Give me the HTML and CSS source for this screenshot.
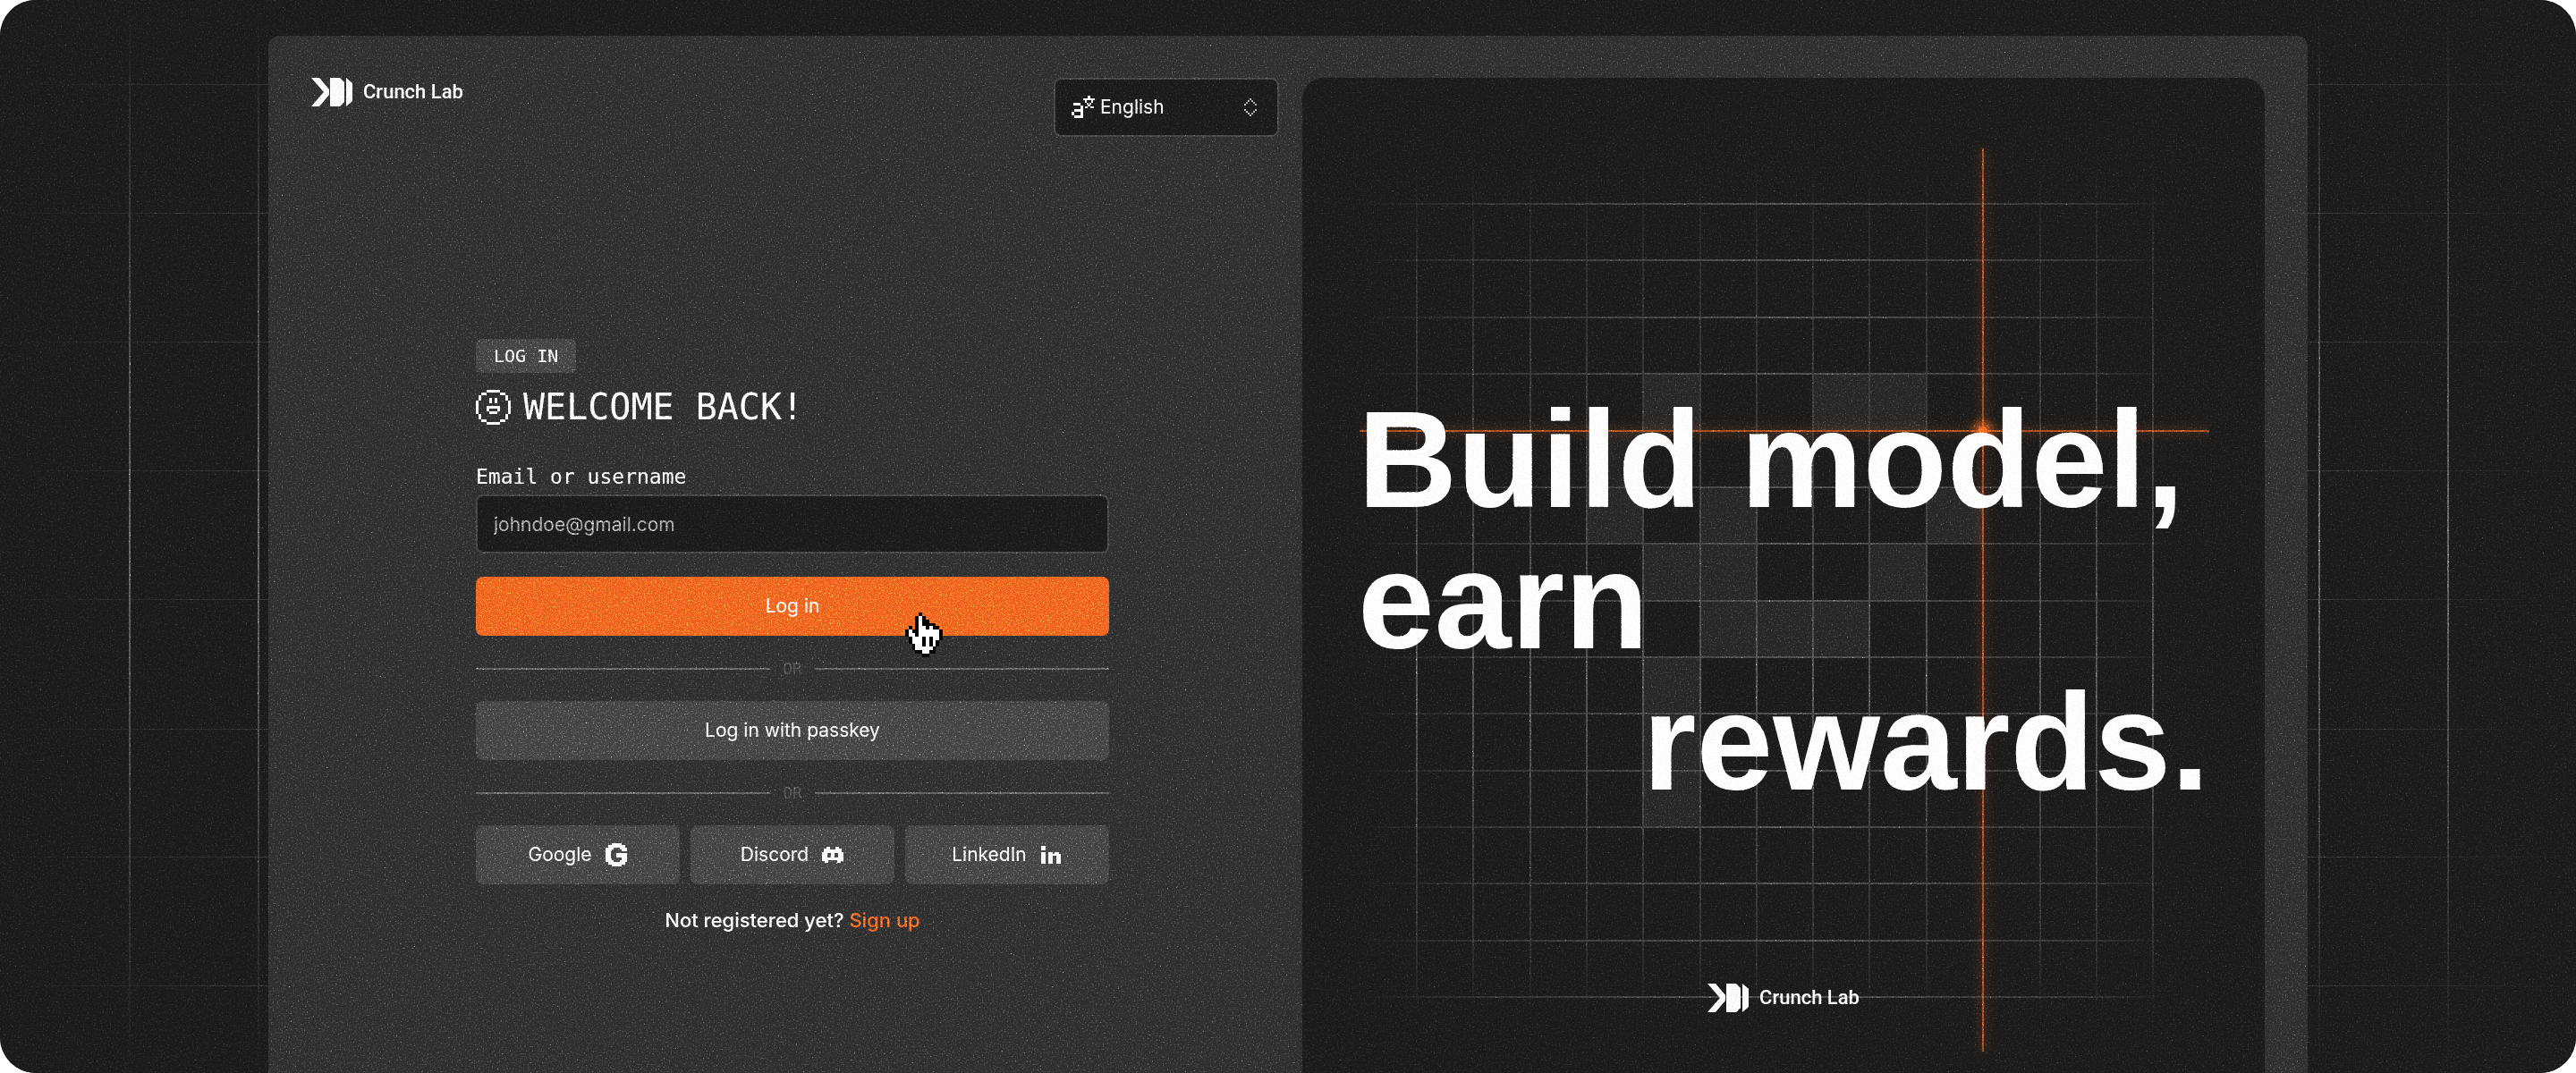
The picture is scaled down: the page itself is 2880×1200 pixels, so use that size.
FILE: index.html
```html
<!DOCTYPE html>
<html lang="en">
<head>
<meta charset="utf-8">
<meta name="viewport" content="width=device-width, initial-scale=1">
<title>Crunch Lab – Log in</title>
<link rel="stylesheet" href="styles.css">
</head>
<body>
<svg class="defs" aria-hidden="true">
  <symbol id="mark" viewBox="0 0 46 32">
    <path fill="currentColor" d="M0 0H9L20 13V19L9 32H0L14 16ZM21 0H32L37 5V27L32 32H21ZM39 0L46 6V26L39 32Z"/>
  </symbol>
</svg>

<div class="stage">
  <svg class="backdrop" aria-hidden="true">
    <defs>
      <linearGradient id="fadeV" x1="0" y1="0" x2="0" y2="1">
        <stop offset="0" stop-color="#606060" stop-opacity="0"/>
        <stop offset=".5" stop-color="#606060"/>
        <stop offset="1" stop-color="#606060" stop-opacity="0"/>
      </linearGradient>
      <linearGradient id="fadeH" x1="0" y1="0" x2="1" y2="0">
        <stop offset="0" stop-color="#303030" stop-opacity="0"/>
        <stop offset=".1" stop-color="#303030"/>
        <stop offset=".9" stop-color="#303030"/>
        <stop offset="1" stop-color="#303030" stop-opacity="0"/>
      </linearGradient>
    </defs>
    <g fill="url(#fadeH)">
      <rect y="94" width="100%" height="1"/><rect y="238" width="100%" height="1"/>
      <rect y="382" width="100%" height="1"/><rect y="526" width="100%" height="1"/>
      <rect y="670" width="100%" height="1"/><rect y="815" width="100%" height="1"/>
      <rect y="958" width="100%" height="1"/><rect y="1102" width="100%" height="1"/>
    </g>
    <g fill="url(#fadeV)">
      <rect x="5%" width="2" height="100%"/><rect x="10%" width="2" height="100%"/>
      <rect x="90%" width="2" height="100%"/><rect x="95%" width="2" height="100%"/>
    </g>
  </svg>

  <main class="window">
    <section class="auth">
      <header class="topbar">
        <div class="brand"><svg class="mark" aria-hidden="true"><use href="#mark"/></svg><span>Crunch Lab</span></div>
        <div class="language">
          <svg class="translate" viewBox="0 0 26 26" aria-hidden="true" fill="currentColor">
            <path d="M2 8H10V11H2ZM10 11H13V25H10ZM3 15H10V18H3ZM0 18H3V22H0ZM3 22H10V25H3ZM18 0H21V3H18ZM13 3H26V5H13ZM15 5H17V8H15ZM22 5H24V8H22ZM17 8H19V10H17ZM20 8H22V10H20ZM18 10H21V12H18ZM15 12H18V14H15ZM21 12H25V14H21Z"/>
          </svg>
          <select aria-label="Language"><option>English</option></select>
          <svg class="updown" viewBox="0 0 14 20" aria-hidden="true" fill="currentColor">
            <path d="M6 0H8V2H6ZM4 2H6V4H4ZM8 2H10V4H8ZM2 4H4V6H2ZM10 4H12V6H10ZM0 6H2V8H0ZM12 6H14V8H12ZM0 12H2V14H0ZM12 12H14V14H12ZM2 14H4V16H2ZM10 14H12V16H10ZM4 16H6V18H4ZM8 16H10V18H8ZM6 18H8V20H6Z"/>
          </svg>
        </div>
      </header>

      <form class="login">
        <span class="badge">LOG IN</span>
        <h1 class="title">
          <svg class="face" viewBox="0 0 13 13" aria-hidden="true" fill="currentColor" shape-rendering="crispEdges">
            <path d="M4 0H9V1H4ZM2 1H4V2H2ZM9 1H11V2H9ZM1 2H2V4H1ZM11 2H12V4H11ZM0 4H1V9H0ZM12 4H13V9H12ZM1 9H2V11H1ZM11 9H12V11H11ZM2 11H4V12H2ZM9 11H11V12H9ZM4 12H9V13H4ZM5 3H6V5H5ZM7 3H8V5H7ZM4 6H9V8H8V7H5V8H4ZM5 8H8V9H5Z"/>
          </svg>
          <span>WELCOME BACK!</span>
        </h1>
        <label class="label" for="user">Email or username</label>
        <input class="field" id="user" type="text" placeholder="johndoe@gmail.com">
        <div class="submit">
          <button class="btn primary" type="submit">Log in</button>
          <svg class="cursor" viewBox="0 0 11 13" aria-hidden="true" shape-rendering="crispEdges">
            <path fill="#000" d="M4 0H5V1H6V2H7V3H9V4H10V5H11V8H10V10H9V12H7V13H5V12H3V11H2V9H1V7H0V5H1V4H2V5H3V1H4Z"/>
            <path fill="#fafafa" d="M4 1H5V4H6V3H6V5H7V4H8V5H9V5H10V8H9V10H8V11H7V12H5V11H3V9H2V7H1V5H2V6H3V7H4Z"/>
            <path fill="#000" d="M5 7H6V10H5ZM7 7H8V10H7Z"/>
          </svg>
        </div>
        <div class="divider"><span>OR</span></div>
        <button class="btn" type="button">Log in with passkey</button>
        <div class="divider"><span>OR</span></div>
        <div class="providers">
          <button class="btn" type="button">Google
            <svg viewBox="0 0 26 26" aria-hidden="true" fill="currentColor"><path d="M8 0H19V2H23V5H25V9H19V7H17V5H10V7H8V9H7V17H8V19H10V21H17V19H19V16H13V11H25V21H23V24H19V26H8V24H4V21H1V5H4V2H8Z"/></svg>
          </button>
          <button class="btn" type="button">Discord
            <svg viewBox="0 0 26 26" aria-hidden="true" fill="currentColor"><path fill-rule="evenodd" d="M6 4H10V7H16V4H20V6H23V10H25V20H22V22H18V19H8V22H4V20H1V10H3V6H6ZM7 11V16H11V11ZM15 11V16H19V11Z"/></svg>
          </button>
          <button class="btn" type="button">LinkedIn
            <svg viewBox="0 0 26 26" aria-hidden="true" fill="currentColor"><path d="M2 3H7V8H2ZM2 10H7V23H2ZM10 10H15V12H17V10H22V12H24V23H19V14H15V23H10Z"/></svg>
          </button>
        </div>
        <p class="signup">Not registered yet? <a href="#">Sign up</a></p>
      </form>
    </section>

    <aside class="hero">
      <svg class="grid" viewBox="0 0 950 1020" aria-hidden="true">
        <defs>
          <linearGradient id="lineH" gradientUnits="userSpaceOnUse" x1="0" y1="0" x2="950" y2="0">
            <stop offset="0" stop-color="#4c4c4c" stop-opacity="0"/><stop offset=".3" stop-color="#3c3c3c"/><stop offset=".5" stop-color="#4c4c4c"/><stop offset=".8" stop-color="#343434"/><stop offset=".95" stop-color="#4c4c4c" stop-opacity="0"/>
          </linearGradient>
          <linearGradient id="lineV" gradientUnits="userSpaceOnUse" x1="0" y1="0" x2="0" y2="1020">
            <stop offset=".02" stop-color="#4c4c4c" stop-opacity="0"/><stop offset=".3" stop-color="#363636"/><stop offset=".6" stop-color="#505050"/><stop offset=".8" stop-color="#343434"/><stop offset=".95" stop-color="#4c4c4c" stop-opacity="0"/>
          </linearGradient>
          <filter id="glow" filterUnits="userSpaceOnUse" x="-30" y="-30" width="1010" height="1080"><feGaussianBlur stdDeviation="6"/></filter>
        </defs>
        <g fill="#262626">
          <path d="M317 257h63v63h-63zM507 257h126v63H507zM253 384h64v63h-64zM380 384h64v63h-64zM633 384h64v63h-64zM317 447h127v64H317zM570 447h63v64h-63zM380 511h190v63H380zM317 574h63v190h-63z"/>
          <path d="M253 320h64v64h-64zM444 320h63v64h-63z" opacity=".7"/>
        </g>
        <path fill="url(#lineH)" d="M0 66h950v2H0zM0 129h950v2H0zM0 193h950v2H0zM0 256h950v2H0zM0 383h950v2H0zM0 446h950v2H0zM0 510h950v2H0zM0 573h950v2H0zM0 636h950v2H0zM0 700h950v2H0zM0 763h950v2H0zM0 826h950v2H0zM0 890h950v2H0zM0 953h950v2H0z"/>
        <path fill="url(#lineV)" d="M63 0h2v1020h-2zM126 0h2v1020h-2zM190 0h2v1020h-2zM253 0h2v1020h-2zM316 0h2v1020h-2zM380 0h2v1020h-2zM443 0h2v1020h-2zM506 0h2v1020h-2zM569 0h2v1020h-2zM633 0h2v1020h-2zM760 0h2v1020h-2zM823 0h2v1020h-2zM886 0h2v1020h-2z"/>
        <g fill="#ed6823">
          <path filter="url(#glow)" opacity=".22" d="M694 5h6v1010h-6zM0 318h950v6H0z"/>
          <path d="M696 5h2v1010h-2zM0 320h950v2H0z" opacity=".6"/>
          <circle cx="697" cy="321" r="5"/><circle cx="697" cy="321" r="9" filter="url(#glow)"/>
        </g>
      </svg>
      <p class="slogan">Build model, earn <span>rewards.</span></p>
      <div class="brand"><svg class="mark" aria-hidden="true"><use href="#mark"/></svg><span>Crunch Lab</span></div>
    </aside>
  </main>

  <svg class="grain" aria-hidden="true">
    <filter id="noise" x="0" y="0" width="100%" height="100%" color-interpolation-filters="sRGB">
      <feTurbulence type="fractalNoise" baseFrequency=".6" numOctaves="3" seed="4"/>
      <feColorMatrix values="1.7 0 0 0 -.84  1.7 0 0 0 -.84  1.7 0 0 0 -.84  0 0 0 0 1"/>
    </filter>
    <rect width="100%" height="100%" filter="url(#noise)"/>
  </svg>
</div>
</body>
</html>
```
FILE: styles.css
```css
* { box-sizing: border-box; }

body {
  margin: 0;
  background: #fff;
  color: #f5f5f5;
  font: 21px/28px Inter, "Liberation Sans", sans-serif;
}

h1, p { margin: 0; font-weight: inherit; }

button, input, select { font: inherit; color: inherit; }

.defs { position: absolute; width: 0; height: 0; }

.stage {
  position: relative;
  display: flex;
  min-height: 100vh;
  padding: 40px 300px 0;
  border-radius: 40px;
  background: #1a1a1a;
  overflow: hidden;
  isolation: isolate;
}

.backdrop, .grain {
  position: absolute;
  inset: 0;
  width: 100%;
  height: 100%;
  pointer-events: none;
}

.grain { mix-blend-mode: color-dodge; }

.window {
  position: relative;
  flex: 1;
  display: grid;
  grid-template-columns: repeat(2, minmax(0, 1fr));
  gap: 32px;
  padding: 47px 48px 0;
  border-radius: 12px 12px 0 0;
  background: #2e2e2e;
}

.auth { display: flex; flex-direction: column; }

.topbar {
  display: flex;
  justify-content: space-between;
  align-items: flex-start;
  margin-right: -6px;
}

.brand {
  display: flex;
  align-items: center;
  gap: 12px;
  font: 500 22px/32px "Roboto", "Liberation Sans", sans-serif;
}

.mark { width: 46px; height: 32px; }

.language {
  position: relative;
  width: 252px;
}

.language select {
  width: 100%;
  height: 66px;
  padding: 0 50px;
  border: 2px solid #424242;
  border-radius: 8px;
  background: #1a1a1a;
  appearance: none;
}

.translate, .updown { position: absolute; top: 20px; pointer-events: none; }
.translate { left: 20px; width: 26px; height: 26px; }
.updown { right: 25px; top: 23px; width: 14px; height: 20px; color: #aaa; }

.login {
  display: flex;
  flex-direction: column;
  width: 66%;
  max-width: 708px;
  margin: 226px auto 0;
}

.badge, .title, .label, .divider { font-family: "DejaVu Sans Mono", monospace; }

.badge {
  align-self: flex-start;
  padding: 0 20px;
  border-radius: 6px;
  background: #424242;
  font-size: 20px;
  line-height: 38px;
}

.title {
  display: flex;
  align-items: center;
  gap: 14px;
  margin-top: 16px;
  font-size: 40px;
  line-height: 44px;
}

.face { width: 39px; height: 39px; }

.label { margin-top: 40px; font-size: 23px; line-height: 32px; }

.field {
  height: 66px;
  margin-top: 4px;
  padding: 0 18px;
  border: 2px solid #424242;
  border-radius: 8px;
  background: #1a1a1a;
}

.field::placeholder { color: #a0a0a0; opacity: 1; }

.btn {
  display: flex;
  justify-content: center;
  align-items: center;
  gap: 14px;
  width: 100%;
  height: 66px;
  padding: 0;
  border: 0;
  border-radius: 8px;
  background: #424242;
}

.btn svg { width: 26px; height: 26px; }

.submit { position: relative; margin-top: 26px; }

.primary { background: #e86020; }

.cursor {
  position: absolute;
  top: 40px;
  right: 186px;
  width: 42px;
  height: 50px;
}

.divider {
  display: flex;
  align-items: center;
  gap: 14px;
  height: 73px;
  color: #505050;
  font-size: 18px;
}

.divider::before, .divider::after {
  content: "";
  flex: 1;
  height: 2px;
  background: #606060;
}

.providers {
  display: grid;
  grid-template-columns: repeat(3, 1fr);
  gap: 12px;
}

.signup { margin-top: 26px; text-align: center; font-size: 22px; font-weight: 500; }
.signup a { color: #ed6823; text-decoration: none; }

.hero {
  position: relative;
  display: flex;
  flex-direction: column;
  align-items: center;
  justify-content: space-between;
  padding: 348px 62px 68px;
  border-radius: 24px 24px 0 0;
  background: #1a1a1a;
}

.hero .grid {
  position: absolute;
  top: 74px;
  left: 64px;
  width: calc(100% - 126px);
}

.slogan, .hero .brand { position: relative; }

.slogan {
  width: 100%;
  color: #fafafa;
  font: 700 154px/158px "Liberation Sans", sans-serif;
}

.slogan span { display: block; text-align: right; }
```
